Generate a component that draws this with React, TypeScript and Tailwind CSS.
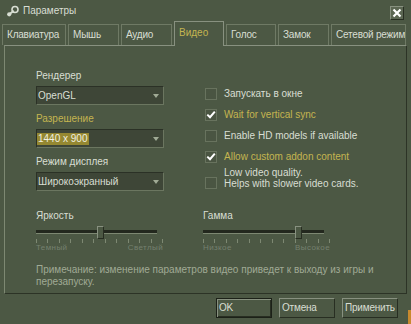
import React from "react";

const tabs = [
  { label: "Клавиатура", w: "w-[64px]" },
  { label: "Мышь", w: "w-[51px]" },
  { label: "Аудио", w: "w-[51px]" },
  { label: "Видео", w: "w-[50px]", active: true },
  { label: "Голос", w: "w-[50px]" },
  { label: "Замок", w: "w-[51px]" },
  { label: "Сетевой режим", w: "w-[75px]" },
];

function SteamIcon() {
  return (
    <svg width="13" height="12" viewBox="0 0 13 12">
      <circle cx="9" cy="4.5" r="3" fill="none" stroke="#d8ded3" strokeWidth="1.6" />
      <path d="M7.2 6.3L3.6 9" stroke="#d8ded3" strokeWidth="2" strokeLinecap="round" />
      <circle cx="3.2" cy="9.3" r="2.1" fill="#d8ded3" />
    </svg>
  );
}

function ComboBox({ value, selected }: { value: string; selected?: boolean }) {
  return (
    <div className="flex h-[19px] w-[128px] items-center border border-t-[#2b3126] border-l-[#2b3126] border-b-[#6b7660] border-r-[#6b7660] bg-[#3e4637] pr-[4px]">
      <span
        className={
          selected
            ? "bg-[#958831] px-[1px] leading-[12px] text-[#f0f0e0]"
            : "px-[1px] leading-[12px] text-[#d8ded3]"
        }
      >
        {value}
      </span>
      <svg className="ml-auto" width="6" height="4" viewBox="0 0 6 4">
        <path d="M0 0h6L3 4z" fill="#a0aa95" />
      </svg>
    </div>
  );
}

function CheckBox({ checked }: { checked?: boolean }) {
  return (
    <div className="flex h-[12px] w-[12px] shrink-0 items-center justify-center border border-[#68735e] bg-[#4a5542]">
      {checked ? (
        <svg width="10" height="9" viewBox="0 0 10 9">
          <path d="M1.3 4.6L4 7.2L8.8 1.6" fill="none" stroke="#ffffff" strokeWidth="2" />
        </svg>
      ) : null}
    </div>
  );
}

function CheckRow({ label, checked }: { label: string; checked?: boolean }) {
  return (
    <div className="flex h-[21px] items-center">
      <CheckBox checked={checked} />
      <span className={checked ? "ml-[7px] leading-[12px] text-[#c4b550]" : "ml-[7px] leading-[12px] text-[#d8ded3]"}>
        {label}
      </span>
    </div>
  );
}

function Slider({ label, left, right, pos }: { label: string; left: string; right: string; pos: number }) {
  const ticks = Array.from({ length: 12 });
  return (
    <div className="w-[127px]">
      <div className="leading-[12px] text-[#d8ded3]">{label}</div>
      <div className="relative mt-[4px] h-[13px] w-[121px]">
        <div className="absolute left-0 right-0 top-[4px] h-[4px] border-b border-[#7d8872] bg-[#23281e]" />
        <div
          className="absolute top-0 h-[13px] w-[7px] border border-t-[#889180] border-l-[#889180] border-b-[#282e22] border-r-[#282e22] bg-[#4c5844]"
          style={{ left: pos }}
        />
      </div>
      <div className="flex h-[4px] justify-between">
        {ticks.map((_, i) => (
          <div key={i} className="h-[4px] w-[1px] bg-[#7d8872]" />
        ))}
      </div>
      <div className="flex justify-between text-[8px] leading-[9px] tracking-[0.4px] text-[#75806f]">
        <span>{left}</span>
        <span>{right}</span>
      </div>
    </div>
  );
}

function Button({ label, primary }: { label: string; primary?: boolean }) {
  return (
    <div
      className={
        primary
          ? "flex h-[20px] w-[56px] items-center whitespace-nowrap border border-[#1c2118] pl-[2px] leading-[12px] tracking-[-0.2px] text-[#d8ded3] shadow-[inset_1px_1px_0_#889180,inset_-1px_-1px_0_#282e22]"
          : "flex h-[20px] w-[56px] items-center whitespace-nowrap border border-t-[#889180] border-l-[#889180] border-b-[#282e22] border-r-[#282e22] pl-[2px] leading-[12px] tracking-[-0.2px] text-[#d8ded3]"
      }
    >
      {label}
    </div>
  );
}

export default function App() {
  return (
    <div
      className="relative flex h-[324px] w-[411px] flex-col overflow-hidden bg-[#4c5844] text-[10px] text-[#d8ded3]"
      style={{ fontFamily: '"Liberation Sans", Arial, sans-serif' }}
    >
      {/* title bar */}
      <div className="flex h-[21px] items-center">
        <div className="ml-[6px] mt-[1px]">
          <SteamIcon />
        </div>
        <span className="ml-[4px] leading-[12px]">Параметры</span>
        <div className="ml-auto mr-[7px] mt-[5px] flex h-[14px] w-[14px] items-center justify-center border border-t-[#889180] border-l-[#889180] border-b-[#282e22] border-r-[#282e22] bg-[#5b6652]">
          <svg width="10" height="10" viewBox="0 0 10 10">
            <path d="M1.5 1.5L8.5 8.5M8.5 1.5L1.5 8.5" stroke="#ffffff" strokeWidth="2.2" />
          </svg>
        </div>
      </div>

      {/* tabs */}
      <div className="flex h-[24px] items-end gap-[2px] pl-[2px]">
        {tabs.map((t) =>
          t.active ? (
            <div
              key={t.label}
              className={`relative z-10 -mb-[1px] flex h-[25px] ${t.w} items-center whitespace-nowrap border border-b-0 border-[#889180] bg-[#4c5844] pb-[2px] pl-[4px] leading-[12px] text-[#c4b550]`}
            >
              {t.label}
            </div>
          ) : (
            <div
              key={t.label}
              className={`flex h-[21px] ${t.w} items-center overflow-hidden whitespace-nowrap border border-b-0 border-[#6f7a65] pl-[4px] leading-[12px] tracking-[-0.2px] text-[#d8ded3]`}
            >
              {t.label}
            </div>
          ),
        )}
      </div>

      {/* panel */}
      <div className="ml-[4px] h-[249px] w-[403px] border border-t-[#889180] border-l-[#7d8872] border-b-[#2c3326] border-r-[#2c3326] pl-[31px] pt-[23px]">
        <div className="flex">
          <div className="w-[128px]">
            <div className="leading-[14px]">Рендерер</div>
            <div className="mt-[3px]">
              <ComboBox value="OpenGL" />
            </div>
            <div className="mt-[7px] leading-[14px] text-[#c4b550]">Разрешение</div>
            <div className="mt-[3px]">
              <ComboBox value="1440 x 900" selected />
            </div>
            <div className="mt-[7px] leading-[14px]">Режим дисплея</div>
            <div className="mt-[3px]">
              <ComboBox value="Широкоэкранный" />
            </div>
          </div>

          <div className="ml-[41px] mt-[14px]">
            <CheckRow label="Запускать в окне" />
            <CheckRow label="Wait for vertical sync" checked />
            <CheckRow label="Enable HD models if available" />
            <CheckRow label="Allow custom addon content" checked />
            <div className="flex items-end">
              <CheckBox />
              <div className="ml-[7px] leading-[11px]">
                <div>Low video quality.</div>
                <div>Helps with slower video cards.</div>
              </div>
            </div>
          </div>
        </div>

        <div className="mt-[19px] flex gap-[40px]">
          <Slider label="Яркость" left="Темный" right="Светлый" pos={61} />
          <Slider label="Гамма" left="Низкое" right="Высокое" pos={92} />
        </div>

        <div className="mt-[12px] leading-[12px] text-[#a0aa95]">
          Примечание: изменение параметров видео приведет к выходу из игры и
          <br />
          перезапуску.
        </div>
      </div>

      {/* buttons */}
      <div className="mt-[4px] flex justify-end gap-[7px] pr-[13px]">
        <Button label="OK" primary />
        <Button label="Отмена" />
        <Button label="Применить" />
      </div>

      <div className="absolute bottom-0 right-0 h-[14px] w-[3px] bg-[#c8892e]" />
    </div>
  );
}
